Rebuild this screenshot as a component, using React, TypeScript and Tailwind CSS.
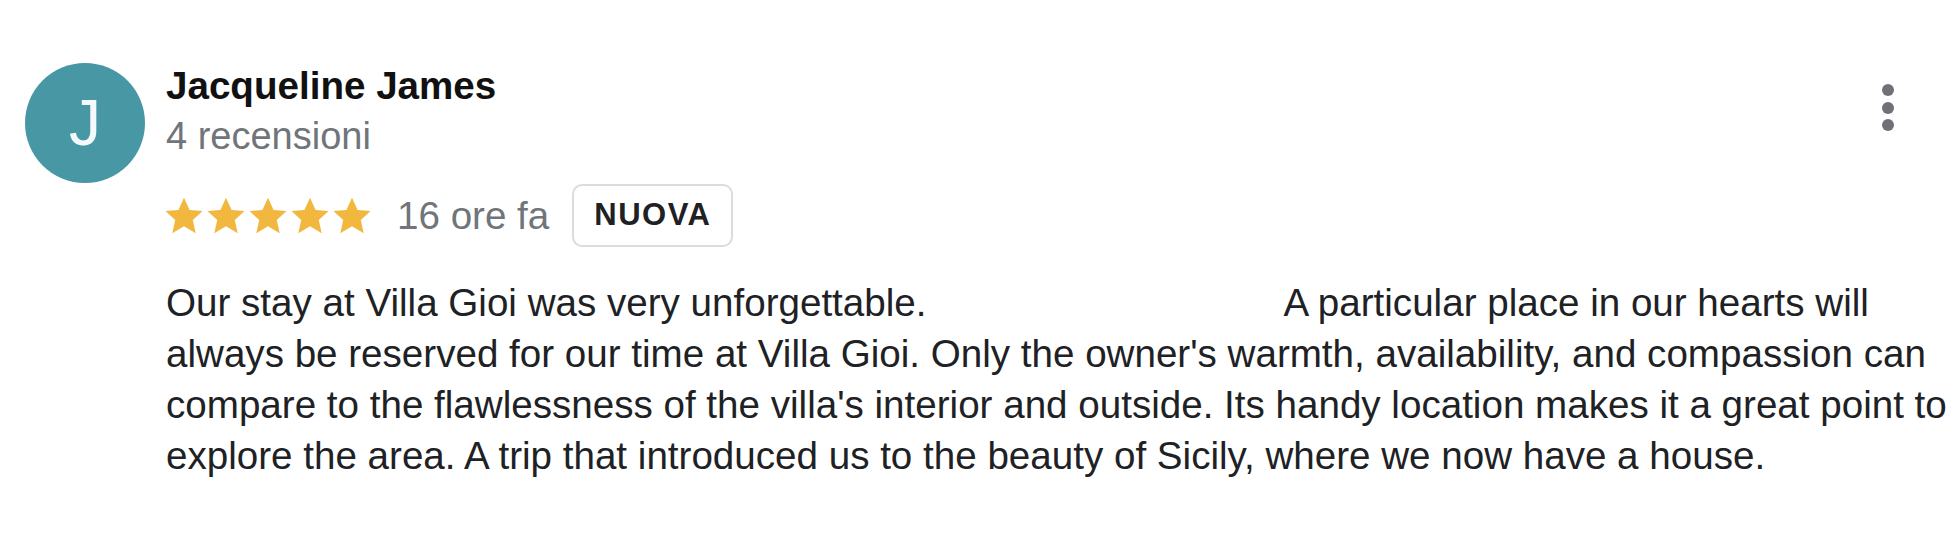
import React from 'react';

const Star = () => (
  <svg viewBox="0 0 24 24" className="w-[42px] h-[42px] shrink-0" aria-hidden>
    <path
      fill="#f1b73f"
      d="M12 1.6l3.2 7 7.4.6-5.6 5.1 1.7 7.5L12 17.9l-6.7 3.9 1.7-7.5-5.6-5.1 7.4-.6z"
    />
  </svg>
);

const MoreButton = () => (
  <button className="flex flex-col items-center gap-[5.5px] px-3 py-2" aria-label="Altro">
    <span className="w-[12px] h-[12px] rounded-full bg-[#6e7175]" />
    <span className="w-[12px] h-[12px] rounded-full bg-[#6e7175]" />
    <span className="w-[12px] h-[12px] rounded-full bg-[#6e7175]" />
  </button>
);

export default function App() {
  return (
    <div
      className="w-[1954px] h-[534px] bg-white overflow-hidden pl-[25px] pt-[63px]"
      style={{ fontFamily: '"Liberation Sans", Arial, sans-serif' }}
    >
      <div className="flex gap-[21px]">
        {/* Avatar */}
        <div className="w-[120px] h-[120px] shrink-0 rounded-full bg-[#4797a5] flex items-center justify-center text-[#f4fafb] text-[64px] leading-none">
          J
        </div>

        <div className="flex-1 min-w-0">
          {/* Header */}
          <div className="flex justify-between items-start pr-[48px]">
            <div>
              <div className="text-[38.6px] leading-[46px] font-bold text-[#111111]">
                Jacqueline James
              </div>
              <div className="mt-[2px] text-[38px] leading-[50px] text-[#70757a]">4 recensioni</div>
            </div>
            <div className="mt-[13px]">
              <MoreButton />
            </div>
          </div>

          {/* Rating row */}
          <div className="flex items-center mt-[23px] h-[63px]">
            <div className="flex ml-[-3px]">
              <Star />
              <Star />
              <Star />
              <Star />
              <Star />
            </div>
            <span className="ml-[24px] text-[38.6px] leading-[50px] text-[#70757a]">16 ore fa</span>
            <span className="ml-[23px] h-[63px] px-[20px] flex items-center border-2 border-[#dcdcdc] rounded-[10px] text-[31px] font-bold tracking-[1.5px] text-[#202124]">
              NUOVA
            </span>
          </div>

          {/* Review body */}
          <p className="mt-[30px] text-[38.6px] leading-[51px] text-[#202124]">
            Our stay at Villa Gioi was very unforgettable.
            <span className="inline-block w-[357px]" />
            A particular place in our hearts will always be reserved for our time at Villa Gioi. Only the owner's warmth, availability, and compassion can compare to the flawlessness of the villa's interior and outside. Its handy location makes it a great point to explore the area. A trip that introduced us to the beauty of Sicily, where we now have a house.
          </p>
        </div>
      </div>
    </div>
  );
}
